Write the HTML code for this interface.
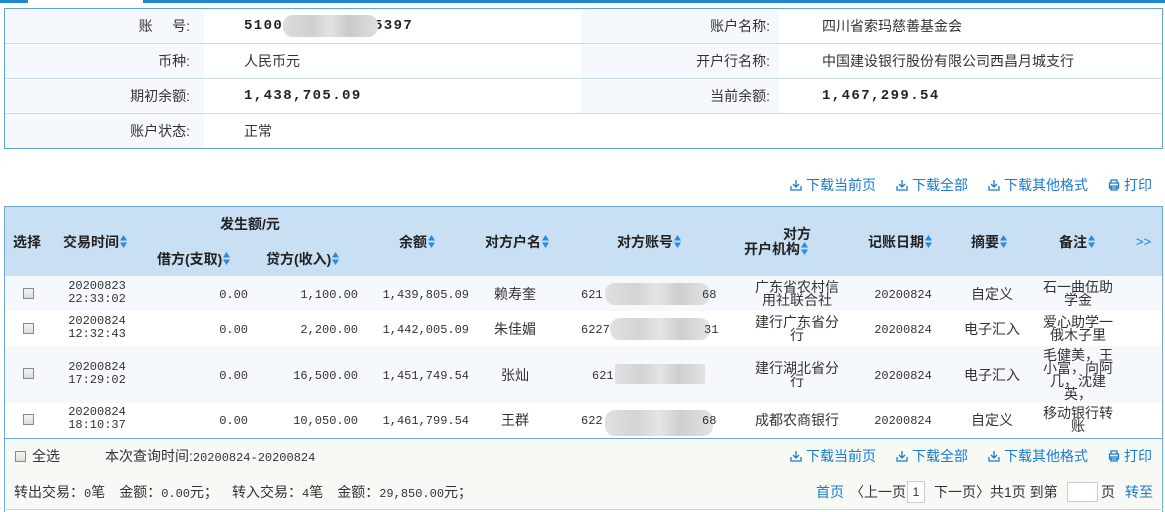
<!DOCTYPE html>
<html><head><meta charset="utf-8">
<style>
*{margin:0;padding:0;box-sizing:border-box}
body{width:1165px;height:512px;position:relative;background:#fff;font-family:"Liberation Sans","Noto Sans CJK SC",sans-serif;font-size:14px;color:#333;overflow:hidden}
.a{position:absolute;white-space:nowrap;line-height:16px}
.r{text-align:right}
.c{text-align:center}
.num{font-family:"Liberation Mono","Noto Sans CJK SC",monospace;font-size:12px}
.bn{font-family:"Liberation Mono",monospace;font-weight:bold;font-size:14px;letter-spacing:1.4px;color:#222}
.h{font-weight:bold;color:#222;font-size:14px}
.h svg{vertical-align:-1px;margin-left:1px}
.lnk{color:#1a7bd0}
.cb{position:absolute;width:11px;height:11px;border:1px solid #8a8a8a;background:linear-gradient(#f4f4f4,#dcdcdc)}
.blur{position:absolute;height:22px;border-radius:10px;background:linear-gradient(90deg,#ddd,#cfcfcf 30%,#e2e2e2 50%,#c9c9c9 70%,#e0e0e0);opacity:.9}
.rm{position:absolute;width:72px;text-align:center;line-height:13px;white-space:normal;word-break:break-all;font-size:14px}
</style></head><body>
<svg width="0" height="0" style="position:absolute"><defs><symbol id="s" viewBox="0 0 7 13"><path d="M3.5 0L7 5.5H0z M3.5 13L0 7.5h7z" fill="#2a8ae0"/></symbol><symbol id="d" viewBox="0 0 12 12"><path d="M6 1v7M3 5l3 3 3-3M1 7v4h10V7" fill="none" stroke="#1a7bd0" stroke-width="1.3"/></symbol><symbol id="p" viewBox="0 0 12 12"><path d="M3 4V1h6v3M1.5 4h9v5h-9zM3 7h6v4H3z" fill="none" stroke="#1a7bd0" stroke-width="1.3"/></symbol></defs></svg>
<div style="position:absolute;left:0;top:0;width:28px;height:3px;background:#1d87d3"></div>
<div style="position:absolute;left:143px;top:0;width:1022px;height:3px;background:#1d87d3"></div>
<div style="position:absolute;left:4px;top:8px;width:1159px;height:141px;border:1px solid #5ea3e2"></div>
<div style="position:absolute;left:5px;top:9px;width:199px;height:139px;background:#f5f9fd"></div>
<div style="position:absolute;left:581px;top:9px;width:198px;height:104px;background:#f5f9fd"></div>
<div style="position:absolute;left:5px;top:43px;width:1157px;height:1px;background:#c9dbec"></div>
<div style="position:absolute;left:5px;top:78px;width:1157px;height:1px;background:#c9dbec"></div>
<div style="position:absolute;left:5px;top:113px;width:1157px;height:1px;background:#c9dbec"></div>
<div class="a r" style="left:90px;width:100px;top:18px">账&nbsp;&nbsp;&nbsp;&nbsp;&nbsp;号:</div>
<div class="a r" style="left:90px;width:100px;top:53px">币种:</div>
<div class="a r" style="left:90px;width:100px;top:88px">期初余额:</div>
<div class="a r" style="left:90px;width:100px;top:123px">账户状态:</div>
<div class="a bn" style="left:244px;top:18px">5100</div>
<div class="blur" style="left:283px;top:15px;width:95px"></div>
<div class="a bn" style="left:374px;top:18px">5397</div>
<div class="blur" style="left:283px;top:15px;width:95px;opacity:1"></div>
<div class="a" style="left:244px;top:53px">人民币元</div>
<div class="a bn" style="left:244px;top:88px">1,438,705.09</div>
<div class="a" style="left:244px;top:123px">正常</div>
<div class="a r" style="left:650px;width:120px;top:18px">账户名称:</div>
<div class="a r" style="left:650px;width:120px;top:53px">开户行名称:</div>
<div class="a r" style="left:650px;width:120px;top:88px">当前余额:</div>
<div class="a" style="left:822px;top:18px">四川省索玛慈善基金会</div>
<div class="a" style="left:822px;top:53px">中国建设银行股份有限公司西昌月城支行</div>
<div class="a bn" style="left:822px;top:88px">1,467,299.54</div>

<svg style="position:absolute;left:790px;top:179px" width="12" height="12"><use href="#d"/></svg>
<div class="a lnk" style="left:806px;top:177px">下载当前页</div>
<svg style="position:absolute;left:896px;top:179px" width="12" height="12"><use href="#d"/></svg>
<div class="a lnk" style="left:912px;top:177px">下载全部</div>
<svg style="position:absolute;left:988px;top:179px" width="12" height="12"><use href="#d"/></svg>
<div class="a lnk" style="left:1004px;top:177px">下载其他格式</div>
<svg style="position:absolute;left:1108px;top:179px" width="12" height="12"><use href="#p"/></svg>
<div class="a lnk" style="left:1124px;top:177px">打印</div>

<div style="position:absolute;left:4px;top:206px;width:1159px;height:306px;border:1px solid #6ea8de;border-bottom:none"></div>
<div style="position:absolute;left:5px;top:207px;width:1157px;height:69px;background:#c8dff4"></div>
<div style="position:absolute;left:5px;top:276px;width:1157px;height:35px;background:#f5f9fd"></div>
<div style="position:absolute;left:5px;top:346px;width:1157px;height:57px;background:#f5f9fd"></div>
<div style="position:absolute;left:4px;top:438px;width:1159px;height:1px;background:#6ea8de"></div>
<div style="position:absolute;left:5px;top:439px;width:1157px;height:70px;background:#f6f9f4"></div>
<div style="position:absolute;left:4px;top:509px;width:1159px;height:1px;background:#d6d6d6"></div>

<div class="a h" style="left:13px;top:234px">选择</div>
<div class="a h" style="left:63px;top:234px">交易时间<svg width="7" height="13"><use href="#s"/></svg></div>
<div class="a h" style="left:220px;top:216px">发生额/元</div>
<div class="a h" style="left:157px;top:251px">借方(支取)<svg width="7" height="13"><use href="#s"/></svg></div>
<div class="a h" style="left:266px;top:251px">贷方(收入)<svg width="7" height="13"><use href="#s"/></svg></div>
<div class="a h" style="left:399px;top:234px">余额<svg width="7" height="13"><use href="#s"/></svg></div>
<div class="a h" style="left:485px;top:234px">对方户名<svg width="7" height="13"><use href="#s"/></svg></div>
<div class="a h" style="left:617px;top:234px">对方账号<svg width="7" height="13"><use href="#s"/></svg></div>
<div class="a h" style="left:783px;top:228px;line-height:13px">对方</div>
<div class="a h" style="left:744px;top:242px;line-height:13px">开户机构<svg width="7" height="13"><use href="#s"/></svg></div>
<div class="a h" style="left:868px;top:234px">记账日期<svg width="7" height="13"><use href="#s"/></svg></div>
<div class="a h" style="left:971px;top:234px">摘要<svg width="7" height="13"><use href="#s"/></svg></div>
<div class="a h" style="left:1059px;top:234px">备注<svg width="7" height="13"><use href="#s"/></svg></div>
<div class="a" style="left:1136px;top:234px;color:#1a7bd0;font-size:13px">&gt;&gt;</div>

<div class="cb" style="left:23px;top:288px"></div>
<div class="a num c" style="left:62px;width:70px;top:280px;line-height:13px">20200823<br>22:33:02</div>
<div class="a num r" style="left:170px;width:78px;top:287px">0.00</div>
<div class="a num r" style="left:270px;width:88px;top:287px">1,100.00</div>
<div class="a num r" style="left:370px;width:99px;top:287px">1,439,805.09</div>
<div class="a c" style="left:475px;width:80px;top:286px">赖寿奎</div>
<div class="a num" style="left:581px;top:287px">621</div><div class="blur" style="left:605px;top:283px;width:105px"></div><div class="a num" style="left:702px;top:287px">68</div>
<div class="rm" style="left:755px;top:281px;width:84px">广东省农村信用社联合社</div>
<div class="a num c" style="left:863px;width:80px;top:287px">20200824</div>
<div class="a c" style="left:952px;width:80px;top:286px">自定义</div>
<div class="rm" style="left:1042px;top:281px">石一曲伍助学金</div>

<div class="cb" style="left:23px;top:323px"></div>
<div class="a num c" style="left:62px;width:70px;top:315px;line-height:13px">20200824<br>12:32:43</div>
<div class="a num r" style="left:170px;width:78px;top:322px">0.00</div>
<div class="a num r" style="left:270px;width:88px;top:322px">2,200.00</div>
<div class="a num r" style="left:370px;width:99px;top:322px">1,442,005.09</div>
<div class="a c" style="left:475px;width:80px;top:321px">朱佳媚</div>
<div class="a num" style="left:581px;top:322px">6227</div><div class="blur" style="left:610px;top:318px;width:100px"></div><div class="a num" style="left:704px;top:322px">31</div>
<div class="rm" style="left:755px;top:316px;width:84px">建行广东省分行</div>
<div class="a num c" style="left:863px;width:80px;top:322px">20200824</div>
<div class="a c" style="left:952px;width:80px;top:321px">电子汇入</div>
<div class="rm" style="left:1042px;top:316px">爱心助学一俄木子里</div>

<div class="cb" style="left:23px;top:368px"></div>
<div class="a num c" style="left:62px;width:70px;top:361px;line-height:13px">20200824<br>17:29:02</div>
<div class="a num r" style="left:170px;width:78px;top:368px">0.00</div>
<div class="a num r" style="left:270px;width:88px;top:368px">16,500.00</div>
<div class="a num r" style="left:370px;width:99px;top:368px">1,451,749.54</div>
<div class="a c" style="left:475px;width:80px;top:367px">张灿</div>
<div class="a num" style="left:592px;top:368px">621</div><div class="blur" style="left:615px;top:364px;width:90px;border-radius:2px;height:20px"></div>
<div class="rm" style="left:755px;top:362px;width:84px">建行湖北省分行</div>
<div class="a num c" style="left:863px;width:80px;top:368px">20200824</div>
<div class="a c" style="left:952px;width:80px;top:367px">电子汇入</div>
<div class="rm" style="left:1042px;top:349px">毛健美，王小富，向阿几，沈建英，</div>

<div class="cb" style="left:23px;top:414px"></div>
<div class="a num c" style="left:62px;width:70px;top:406px;line-height:13px">20200824<br>18:10:37</div>
<div class="a num r" style="left:170px;width:78px;top:413px">0.00</div>
<div class="a num r" style="left:270px;width:88px;top:413px">10,050.00</div>
<div class="a num r" style="left:370px;width:99px;top:413px">1,461,799.54</div>
<div class="a c" style="left:475px;width:80px;top:412px">王群</div>
<div class="a num" style="left:581px;top:413px">622</div><div class="blur" style="left:605px;top:410px;width:108px;height:26px"></div><div class="a num" style="left:702px;top:413px">68</div>
<div class="a c" style="left:752px;width:90px;top:412px">成都农商银行</div>
<div class="a num c" style="left:863px;width:80px;top:413px">20200824</div>
<div class="a c" style="left:952px;width:80px;top:412px">自定义</div>
<div class="rm" style="left:1042px;top:407px">移动银行转账</div>

<div class="cb" style="left:15px;top:451px"></div>
<div class="a" style="left:32px;top:448px">全选</div>
<div class="a" style="left:105px;top:448px">本次查询时间:<span class="num">20200824-20200824</span></div>
<svg style="position:absolute;left:790px;top:450px" width="12" height="12"><use href="#d"/></svg>
<div class="a lnk" style="left:806px;top:448px">下载当前页</div>
<svg style="position:absolute;left:896px;top:450px" width="12" height="12"><use href="#d"/></svg>
<div class="a lnk" style="left:912px;top:448px">下载全部</div>
<svg style="position:absolute;left:988px;top:450px" width="12" height="12"><use href="#d"/></svg>
<div class="a lnk" style="left:1004px;top:448px">下载其他格式</div>
<svg style="position:absolute;left:1108px;top:450px" width="12" height="12"><use href="#p"/></svg>
<div class="a lnk" style="left:1124px;top:448px">打印</div>

<div class="a" style="left:14px;top:484px">转出交易：<span class="num">0</span>笔<span style="display:inline-block;width:14px"></span>金额：<span class="num">0.00</span>元；<span style="display:inline-block;width:14px"></span>转入交易：<span class="num">4</span>笔<span style="display:inline-block;width:14px"></span>金额：<span class="num">29,850.00</span>元；</div>
<div class="a lnk" style="left:816px;top:484px">首页</div>
<div class="a" style="left:850px;top:484px">〈上一页</div>
<div style="position:absolute;left:907px;top:481px;width:18px;height:22px;border:1px solid #ccc;background:#fff;font-size:12px;text-align:center;line-height:20px">1</div>
<div class="a" style="left:934px;top:484px">下一页〉共1页&nbsp;到第</div>
<div style="position:absolute;left:1067px;top:482px;width:31px;height:20px;border:1px solid #ccc;background:#fff"></div>
<div class="a" style="left:1101px;top:484px">页</div>
<div class="a lnk" style="left:1125px;top:484px">转至</div>
</body></html>
